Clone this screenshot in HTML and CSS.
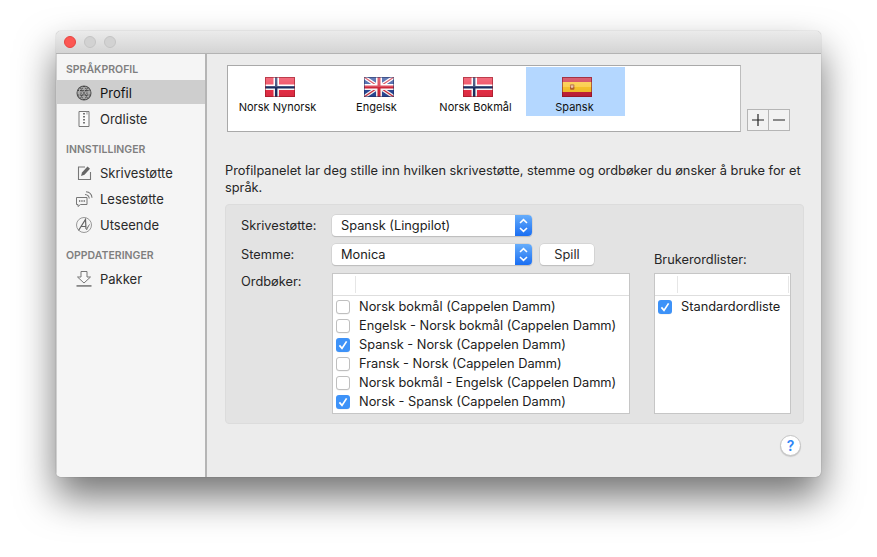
FILE: index.html
```html
<!DOCTYPE html>
<html lang="no">
<head>
<meta charset="utf-8">
<title>Språkprofil</title>
<link rel="stylesheet" href="styles.css">
</head>
<body>
<svg class="defs" width="0" height="0">
  <defs>
    <linearGradient id="gloss" x1="0" y1="0" x2="0" y2="1">
      <stop offset="0" stop-color="#fff" stop-opacity=".3"/>
      <stop offset=".48" stop-color="#fff" stop-opacity=".18"/>
      <stop offset=".5" stop-color="#000" stop-opacity=".02"/>
      <stop offset="1" stop-color="#000" stop-opacity=".1"/>
    </linearGradient>
    <symbol id="no" viewBox="0 0 30 20">
      <rect width="30" height="20" fill="#ee3048"/>
      <path d="M8.500 0h5.500v20H8.500zM0 7.500h30v5.500H0z" fill="#fff"/>
      <path d="M10 0h2.400v20H10zM0 9h30v2.400H0z" fill="#1b2f63"/>
      <rect width="30" height="20" fill="url(#gloss)"/>
      <rect x=".5" y=".5" width="29" height="19" fill="none" stroke="#8e1522" stroke-opacity=".55"/>
    </symbol>
    <symbol id="gb" viewBox="0 0 30 20">
      <rect width="30" height="20" fill="#2a4a9b"/>
      <path d="M0 0L30 20M30 0L0 20" stroke="#fff" stroke-width="3.600"/>
      <path d="M0 0L30 20M30 0L0 20" stroke="#d3293c" stroke-width="1.100"/>
      <path d="M12 0h6v20h-6zM0 7h30v6H0z" fill="#fff"/>
      <path d="M13.500 0h3v20h-3zM0 8.500h30v3H0z" fill="#d3293c"/>
      <rect width="30" height="20" fill="url(#gloss)"/>
      <rect x=".5" y=".5" width="29" height="19" fill="none" stroke="#1b2a5e" stroke-opacity=".5"/>
    </symbol>
    <symbol id="es" viewBox="0 0 30 20">
      <rect width="30" height="20" fill="#c9213a"/>
      <rect y="5" width="30" height="10" fill="#fbc52c"/>
      <rect x="8" y="7.300" width="4.400" height="5.400" rx="1" fill="#b5622f"/>
      <rect x="9" y="8.500" width="2.200" height="2.400" fill="#e8b9a0"/>
      <rect width="30" height="20" fill="url(#gloss)"/>
      <rect x=".5" y=".5" width="29" height="19" fill="none" stroke="#7e1423" stroke-opacity=".6"/>
    </symbol>
    <symbol id="check" viewBox="0 0 14 14">
      <path d="M3.400 7.400L6 10.400L10.600 3.400" fill="none" stroke="#fff" stroke-width="1.700"/>
    </symbol>
    <symbol id="updown" viewBox="0 0 17 21">
      <path d="M5 8L8.500 4.600L12 8M5 13L8.500 16.400L12 13" fill="none" stroke="#fff" stroke-width="1.500"/>
    </symbol>
  </defs>
</svg>

<div class="window">
  <header class="titlebar">
    <span class="light light-close"></span>
    <span class="light"></span>
    <span class="light"></span>
  </header>
  <div class="body">
    <nav class="sidebar">
      <h2 class="side-head">SPRÅKPROFIL</h2>
      <a class="side-item selected">
        <svg class="side-icon" viewBox="0 0 18 18"><circle cx="9" cy="9" r="7" fill="#a9a9a9" stroke="#555" stroke-width="1.100"/><path d="M2.600 6.500h12.800M2.400 11h13.200M9 2c-4 4-4 10 0 14M9 2c4 4 4 10 0 14M5 3.600l8 11M13 3.600l-8 11" fill="none" stroke="#444" stroke-width="1" stroke-dasharray="1.400 1"/></svg>
        Profil
      </a>
      <a class="side-item">
        <svg class="side-icon" viewBox="0 0 18 18"><path d="M4 1.500h10v15H4z" fill="#fafafa" stroke="#777"/><path d="M9 3v1.400M9 6v1.400M9 9v1.400M9 12v1.400" stroke="#666" stroke-width="1.800"/><path d="M12 1.500v3" stroke="#999"/></svg>
        Ordliste
      </a>
      <h2 class="side-head">INNSTILLINGER</h2>
      <a class="side-item">
        <svg class="side-icon" viewBox="0 0 18 18"><path d="M10 3H3.500v12.500H15.500V8" fill="none" stroke="#777" stroke-width="1.100"/><path d="M6 12l1-3.500L12.500 2.500l2.500 2.200L9.500 10.800z" fill="#666"/></svg>
        Skrivestøtte
      </a>
      <a class="side-item">
        <svg class="side-icon" viewBox="0 0 18 18"><path d="M1.500 7.500h10.500v7H5.500L3 16.500v-2H1.500z" fill="#f4f4f4" stroke="#777"/><path d="M4 11h1.300M6.300 11h1.300M8.600 11h1.300" stroke="#666" stroke-width="1.300"/><path d="M10 4.500c2.500.2 4 1.500 4.300 4M11 1.800c3.500.3 5.700 2.500 6 6" fill="none" stroke="#777" stroke-width="1.100"/></svg>
        Lesestøtte
      </a>
      <a class="side-item">
        <svg class="side-icon" viewBox="0 0 18 18"><circle cx="9" cy="9" r="7.500" fill="none" stroke="#999"/><path d="M3.500 14.500L10.500 3.500L11 13M6 10.500h5" fill="none" stroke="#666" stroke-width="1.200"/><path d="M11.500 14c1-2 2-4.500 3-5.500" fill="none" stroke="#666"/></svg>
        Utseende
      </a>
      <h2 class="side-head">OPPDATERINGER</h2>
      <a class="side-item">
        <svg class="side-icon" viewBox="0 0 18 18"><path d="M6 1.500h6v5.500h3.500L9 13L2.500 7H6z" fill="#fafafa" stroke="#777"/><rect x="1.500" y="15" width="15" height="1.800" fill="#888"/></svg>
        Pakker
      </a>
    </nav>

    <main class="main">
      <div class="profile-row">
        <div class="profiles">
          <div class="profile">
            <svg class="flag"><use href="#no"/></svg>
            <span class="profile-name">Norsk Nynorsk</span>
          </div>
          <div class="profile">
            <svg class="flag"><use href="#gb"/></svg>
            <span class="profile-name">Engelsk</span>
          </div>
          <div class="profile">
            <svg class="flag"><use href="#no"/></svg>
            <span class="profile-name">Norsk Bokmål</span>
          </div>
          <div class="profile active">
            <svg class="flag"><use href="#es"/></svg>
            <span class="profile-name">Spansk</span>
          </div>
        </div>
        <div class="addremove">
          <button class="ar-btn"><svg width="14" height="14" viewBox="0 0 14 14"><path d="M1 7h12M7 1v12" stroke="#222" stroke-width="1.200"/></svg></button>
          <button class="ar-btn"><svg width="14" height="14" viewBox="0 0 14 14"><path d="M1 7h12" stroke="#222" stroke-width="1.200"/></svg></button>
        </div>
      </div>

      <p class="intro">Profilpanelet lar deg stille inn hvilken skrivestøtte, stemme og ordbøker du ønsker å bruke for et språk.</p>

      <section class="panel">
        <label class="form-label">Skrivestøtte:</label>
        <div class="control">
          <div class="select">
            <span class="select-value">Spansk (Lingpilot)</span>
            <span class="stepper"><svg width="17" height="21"><use href="#updown"/></svg></span>
          </div>
        </div>
        <span></span>

        <label class="form-label">Stemme:</label>
        <div class="control">
          <div class="select">
            <span class="select-value">Monica</span>
            <span class="stepper"><svg width="17" height="21"><use href="#updown"/></svg></span>
          </div>
          <button class="spill">Spill</button>
        </div>
        <label class="user-label">Brukerordlister:</label>

        <label class="form-label form-label-top">Ordbøker:</label>
        <div class="table">
          <div class="thead"><span class="th th-check"></span></div>
          <ul class="tbody">
            <li class="row"><span class="box"></span>Norsk bokmål (Cappelen Damm)</li>
            <li class="row"><span class="box"></span>Engelsk - Norsk bokmål (Cappelen Damm)</li>
            <li class="row"><span class="box on"><svg width="14" height="14"><use href="#check"/></svg></span>Spansk - Norsk (Cappelen Damm)</li>
            <li class="row"><span class="box"></span>Fransk - Norsk (Cappelen Damm)</li>
            <li class="row"><span class="box"></span>Norsk bokmål - Engelsk (Cappelen Damm)</li>
            <li class="row"><span class="box on"><svg width="14" height="14"><use href="#check"/></svg></span>Norsk - Spansk (Cappelen Damm)</li>
          </ul>
        </div>
        <div class="table">
          <div class="thead"><span class="th th-check"></span><span class="th th-fill"></span></div>
          <ul class="tbody">
            <li class="row"><span class="box on"><svg width="14" height="14"><use href="#check"/></svg></span>Standardordliste</li>
          </ul>
        </div>
      </section>

      <div class="help-row"><button class="help">?</button></div>
    </main>
  </div>
</div>
</body>
</html>
```
FILE: styles.css
```css
* { box-sizing: border-box; }
html, body { margin: 0; padding: 0; }
body {
  width: 877px;
  height: 557px;
  overflow: hidden;
  background: #fff;
  padding: 31px 0 0 56px;
  font-family: Inter, "Liberation Sans", sans-serif;
  font-size: 12.8px;
  color: #222;
}
.defs { display: block; height: 0; }
.window {
  width: 765px;
  height: 446px;
  display: flex;
  flex-direction: column;
  background: #ececec;
  border-radius: 5px;
  overflow: hidden;
  box-shadow: 0 0 1px rgba(0,0,0,.45), 0 20px 38px rgba(0,0,0,.55);
}
.titlebar {
  height: 23px;
  flex: none;
  display: flex;
  align-items: center;
  gap: 8px;
  padding: 0 0 0 8px;
  background: linear-gradient(#ebebeb, #d4d4d4);
  border-bottom: 1px solid #b3b3b3;
}
.light {
  width: 12px;
  height: 12px;
  border-radius: 50%;
  background: #d2d2d2;
  border: 1px solid #c4c4c4;
}
.light-close { background: #fc5753; border-color: #e5443f; }
.body { flex: 1; display: flex; min-height: 0; }

.sidebar {
  width: 151px;
  flex: none;
  background: #f5f5f5;
  border-left: 1px solid #cfcfcf;
  border-right: 2px solid #b5b5b5;
  padding-top: 9px;
}
.side-head {
  margin: 13px 0 3px;
  padding-left: 9px;
  height: 14px;
  line-height: 14px;
  font-size: 10.5px;
  font-weight: 600;
  color: #7f7f7f;
}
.side-head:first-child { margin-top: 0; }
.side-item {
  height: 24px;
  display: flex;
  align-items: center;
  padding: 1px 0 0 18px;
  gap: 7px;
  margin-bottom: 2px;
  font-size: 13px;
  color: #2a2a2a;
}
.side-item.selected { background: #cecece; color: #111; }
.side-icon { width: 18px; height: 18px; flex: none; }

.main { flex: 1; padding: 11px 0 0 18px; min-width: 0; }
.profile-row { display: flex; align-items: flex-end; padding-left: 2px; gap: 6px; }
.profiles {
  width: 514px;
  height: 67px;
  display: flex;
  padding: 1px 1px 0 1px;
  align-items: flex-start;
  background: #fff;
  border: 1px solid #a9a9a9;
  border-right-color: #bdbdbd;
}
.profile {
  width: 99px;
  height: 49px;
  display: flex;
  flex-direction: column;
  align-items: center;
  padding-top: 10px;
  font-size: 11px;
  color: #111;
}
.profile.active { background: #b4d7ff; }
.flag { width: 30px; height: 20px; display: block; margin: 0 0 3px 2px; }
.profile-name { line-height: 14px; white-space: nowrap; margin-right: 2px; }
.addremove { display: flex; margin-bottom: 1px; }
.ar-btn {
  width: 22px;
  height: 22px;
  padding: 0;
  margin: 0;
  display: flex;
  align-items: center;
  justify-content: center;
  background: #f2f2f2;
  border: 1px solid #b5b5b5;
}
.ar-btn + .ar-btn { margin-left: -1px; }

.intro {
  margin: 30px 0 0;
  width: 585px;
  height: 42px;
  line-height: 17px;
  color: #262626;
}
.panel {
  width: 579px;
  height: 220px;
  padding: 10px 0 0 15px;
  background: #e3e3e3;
  border: 1px solid #dcdcdc;
  border-radius: 4px;
  display: grid;
  grid-template-columns: 91px 298px 137px;
  grid-template-rows: 21px 21px 141px;
  row-gap: 8px;
}
.form-label { align-self: center; color: #262626; }
.form-label-top { align-self: start; padding-top: 1px; }
.control { display: flex; align-items: center; gap: 8px; }
.select {
  width: 200px;
  height: 21px;
  display: flex;
  justify-content: space-between;
  background: #fff;
  border-radius: 4px;
  box-shadow: 0 0 0 .5px #c8c8c8, 0 1px 1px rgba(0,0,0,.22);
}
.select-value { padding-left: 9px; line-height: 21px; color: #1c1c1c; }
.stepper {
  width: 17px;
  height: 21px;
  border-radius: 0 4px 4px 0;
  background: linear-gradient(#66adfb, #1a6ef2);
}
.stepper svg { display: block; }
.spill {
  width: 54px;
  height: 21px;
  padding: 0;
  background: #fff;
  border: 0;
  border-radius: 4px;
  box-shadow: 0 0 0 .5px #c8c8c8, 0 1px 1px rgba(0,0,0,.2);
  font: inherit;
  color: #2a2a2a;
}
.user-label {
  align-self: end;
  margin: 0 0 -3px 24px;
  line-height: 17px;
  white-space: nowrap;
  color: #262626;
}
.table {
  background: #fff;
  border: 1px solid #c6c6c6;
  display: flex;
  flex-direction: column;
}
.table + .table { margin-left: 24px; width: 137px; }
.thead {
  height: 22px;
  flex: none;
  display: flex;
  align-items: center;
  border-bottom: 1px solid #dedede;
}
.th { display: block; height: 17px; border-right: 1px solid #e6e6e6; }
.th-check { width: 23px; }
.th-fill { width: 111px; }
.tbody { list-style: none; margin: 0; padding: 1px 0 0; }
.row {
  height: 19px;
  display: flex;
  align-items: center;
  padding-left: 3px;
  gap: 9px;
  white-space: nowrap;
  color: #1c1c1c;
}
.box {
  width: 14px;
  height: 14px;
  flex: none;
  background: #fff;
  border: 1px solid #bfbfbf;
  border-radius: 3px;
  box-shadow: 0 .5px .5px rgba(0,0,0,.08);
}
.box.on { background: #3d92f8; border: 0; }
.box svg { display: block; }

.help-row { display: flex; justify-content: flex-end; padding: 11px 3px 0 0; width: 579px; }
.help {
  width: 21px;
  height: 21px;
  padding: 0;
  border-radius: 50%;
  background: #fff;
  border: 1px solid #c4c4c4;
  box-shadow: 0 1px 1px rgba(0,0,0,.15);
  color: #2f86f6;
  font: 600 14px/19px Inter, sans-serif;
}
```
